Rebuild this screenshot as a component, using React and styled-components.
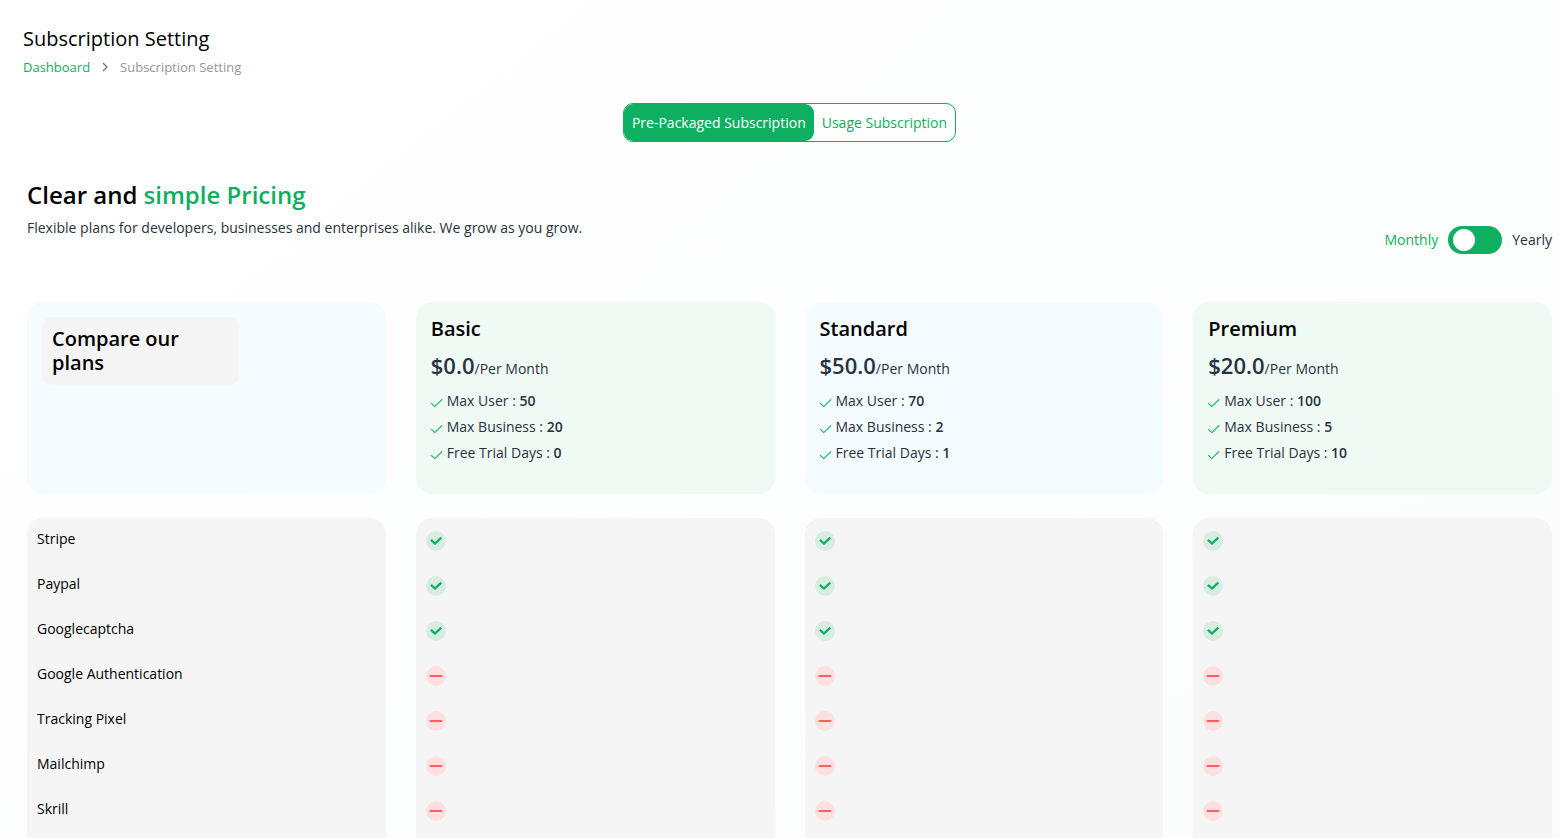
import React, { useState } from 'react';
import styled, { createGlobalStyle } from 'styled-components';

const GlobalStyle = createGlobalStyle`
  * {
    box-sizing: border-box;
  }

  body {
    margin: 0;
    font-family: 'Open Sans', sans-serif;
    font-size: 14px;
    line-height: 20px;
    color: #293240;
    background: #fff;
  }
`;

const Page = styled.main`
  height: 100vh;
  overflow: hidden;
  padding: 24px 8px 0 23px;
  background: linear-gradient(141deg, #ffffff 0%, #fafcfb 100%);
`;

const PageTitle = styled.h1`
  margin: 0;
  font-family: 'Open Sans Medium', 'Open Sans', sans-serif;
  font-size: 20px;
  line-height: 30px;
  font-weight: 500;
  color: #000;
`;

const Breadcrumb = styled.nav`
  display: flex;
  align-items: center;
  gap: 10px;
  margin-top: 3px;
  font-size: 13px;
  color: #94979b;

  a {
    color: #0eaf60;
    text-decoration: none;
  }
`;

const TabsRow = styled.div`
  display: flex;
  justify-content: center;
  margin-top: 26px;
  padding-left: 4px;
`;

const Tabs = styled.div`
  display: flex;
  border: 1px solid #0eaf60;
  border-radius: 10px;
`;

const Tab = styled.button`
  height: 37px;
  padding: 0 8px;
  border: 0;
  border-radius: 9px;
  font: inherit;
  cursor: pointer;
  color: ${props => (props.$active ? '#fff' : '#0eaf60')};
  background: ${props => (props.$active ? '#0eaf60' : 'transparent')};
`;

const Content = styled.div`
  padding: 35px 0 0 4px;
`;

const Intro = styled.section`
  display: flex;
  justify-content: space-between;
  align-items: flex-end;
`;

const Heading = styled.h2`
  margin: 0;
  font-size: 24px;
  line-height: 36px;
  font-weight: 600;
  color: #000;

  span {
    color: #0eaf60;
  }
`;

const Lead = styled.p`
  margin: 5px 0 16px;
`;

const Billing = styled.label`
  display: flex;
  align-items: center;
  gap: 10px;
  cursor: pointer;
`;

const BillingText = styled.span`
  color: ${props => (props.$active ? '#0eaf60' : '#293240')};
`;

const Toggle = styled.input`
  appearance: none;
  display: flex;
  align-items: center;
  width: 54px;
  height: 28px;
  margin: 0;
  padding: 0 5px;
  border-radius: 14px;
  background: #0eaf60;
  cursor: pointer;

  &::before {
    content: '';
    width: 22px;
    height: 22px;
    border-radius: 50%;
    background: #fff;
  }

  &:checked {
    justify-content: flex-end;
  }
`;

const Cards = styled.div`
  display: grid;
  grid-template-columns: repeat(4, 1fr);
  gap: 30px;
  margin-top: 48px;
`;

const Card = styled.section`
  min-height: 192px;
  padding: 15px;
  border-radius: 16px;
  background: ${props => (props.$tint === 'green' ? '#f0faf5' : '#f4fcff')};
`;

const Compare = styled.h3`
  width: 60%;
  margin: 0;
  padding: 10px;
  border-radius: 10px;
  font-size: 20px;
  line-height: 24px;
  font-weight: 600;
  color: #000;
  background: #f5f5f5;
`;

const PlanName = styled.h3`
  margin: 0;
  font-size: 20px;
  line-height: 24px;
  font-weight: 600;
  color: #000;
`;

const Price = styled.p`
  margin: 8px 0 6px;
  line-height: 32px;

  strong {
    font-size: 22px;
    font-weight: 600;
  }
`;

const Limits = styled.ul`
  display: grid;
  gap: 6px;
  margin: 0;
  padding: 0;
  list-style: none;

  li {
    display: flex;
    align-items: center;
    gap: 4px;
  }

  svg {
    margin-top: 4px;
  }

  strong {
    font-weight: 600;
  }
`;

const Features = styled.table`
  width: calc(100% + 60px);
  margin: 24px -30px 0;
  table-layout: fixed;
  border-collapse: separate;
  border-spacing: 30px 0;
  color: #000;

  th,
  td {
    height: 45px;
    padding: 11px 10px 0;
    vertical-align: top;
    text-align: left;
    font-weight: 400;
    background: #f5f5f5;
  }

  td {
    padding-top: 13px;
  }

  tr:first-child > * {
    border-radius: 16px 16px 0 0;
  }

  tr:last-child > * {
    height: 60px;
  }

  svg {
    display: block;
  }
`;

const plans = [
  { name: 'Basic', price: '$0.0', users: 50, business: 20, trial: 0, tint: 'green' },
  { name: 'Standard', price: '$50.0', users: 70, business: 2, trial: 1, tint: 'blue' },
  { name: 'Premium', price: '$20.0', users: 100, business: 5, trial: 10, tint: 'green' },
];

const features = [
  { name: 'Stripe', included: true },
  { name: 'Paypal', included: true },
  { name: 'Googlecaptcha', included: true },
  { name: 'Google Authentication', included: false },
  { name: 'Tracking Pixel', included: false },
  { name: 'Mailchimp', included: false },
  { name: 'Skrill', included: false },
];

const Chevron = () => (
  <svg width="10" height="10" viewBox="0 0 10 10" fill="none" stroke="#6f747b" strokeWidth="1.3" aria-hidden="true">
    <path d="M3 1l4 4-4 4" />
  </svg>
);

const Tick = () => (
  <svg width="12" height="10" viewBox="0 0 12 10" fill="none" stroke="#0eaf60" strokeWidth="1.1" aria-hidden="true">
    <path d="M.2 5.2L3.8 8.6 11.2 1.4" />
  </svg>
);

const Included = () => (
  <svg width="20" height="20" viewBox="0 0 20 20" fill="none" role="img" aria-label="Included">
    <circle cx="10" cy="10" r="10" fill="#d8ece1" />
    <path d="M4.9 8.8L9 12.5l6.3-5.9" stroke="#0eaf60" strokeWidth="2.3" />
  </svg>
);

const Excluded = () => (
  <svg width="20" height="20" viewBox="0 0 20 20" fill="none" role="img" aria-label="Not included">
    <circle cx="10" cy="10" r="10" fill="#ffe0e0" />
    <path d="M3.7 10h12.6" stroke="#ff5f5f" strokeWidth="2" />
  </svg>
);

const PlanCard = ({ plan, yearly }) => (
  <Card $tint={plan.tint}>
    <PlanName>{plan.name}</PlanName>
    <Price>
      <strong>{plan.price}</strong>/Per {yearly ? 'Year' : 'Month'}
    </Price>
    <Limits>
      <li><Tick /><span>Max User : <strong>{plan.users}</strong></span></li>
      <li><Tick /><span>Max Business : <strong>{plan.business}</strong></span></li>
      <li><Tick /><span>Free Trial Days : <strong>{plan.trial}</strong></span></li>
    </Limits>
  </Card>
);

const App = () => {
  const [tab, setTab] = useState('package');
  const [yearly, setYearly] = useState(false);

  return (
    <>
      <GlobalStyle />
      <Page>
        <PageTitle>Subscription Setting</PageTitle>
        <Breadcrumb aria-label="Breadcrumb">
          <a href="#dashboard">Dashboard</a>
          <Chevron />
          <span>Subscription Setting</span>
        </Breadcrumb>
        <TabsRow>
          <Tabs>
            <Tab type="button" $active={tab === 'package'} onClick={() => setTab('package')}>
              Pre-Packaged Subscription
            </Tab>
            <Tab type="button" $active={tab === 'usage'} onClick={() => setTab('usage')}>
              Usage Subscription
            </Tab>
          </Tabs>
        </TabsRow>
        <Content>
          <Intro>
            <div>
              <Heading>Clear and <span>simple Pricing</span></Heading>
              <Lead>Flexible plans for developers, businesses and enterprises alike. We grow as you grow.</Lead>
            </div>
            <Billing>
              <BillingText $active={!yearly}>Monthly</BillingText>
              <Toggle type="checkbox" checked={yearly} onChange={e => setYearly(e.target.checked)} />
              <BillingText $active={yearly}>Yearly</BillingText>
            </Billing>
          </Intro>
          <Cards>
            <Card $tint="blue">
              <Compare>Compare our plans</Compare>
            </Card>
            {plans.map(plan => <PlanCard key={plan.name} plan={plan} yearly={yearly} />)}
          </Cards>
          <Features>
            <tbody>
              {features.map(feature => (
                <tr key={feature.name}>
                  <th scope="row">{feature.name}</th>
                  {plans.map(plan => (
                    <td key={plan.name}>{feature.included ? <Included /> : <Excluded />}</td>
                  ))}
                </tr>
              ))}
            </tbody>
          </Features>
        </Content>
      </Page>
    </>
  );
};

export default App;
